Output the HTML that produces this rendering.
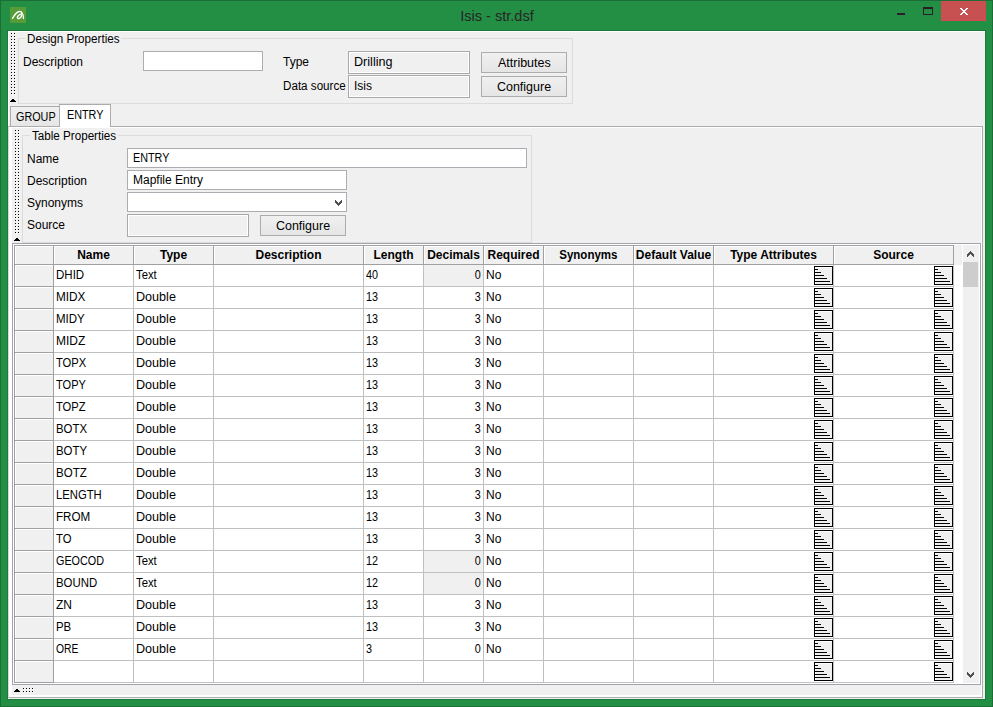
<!DOCTYPE html><html><head><meta charset="utf-8"><style>
*{margin:0;padding:0;box-sizing:border-box}
html,body{width:993px;height:707px;overflow:hidden;background:#238f45}
body{position:relative;font-family:"Liberation Sans",sans-serif;font-size:12px;color:#000}
.a{position:absolute}
.t{position:absolute;white-space:nowrap}
.dot{position:absolute;width:1px;height:1px;background:#000;box-shadow:1px 1px 0 #fff}
.tb{position:absolute;background:#fff;border:1px solid #abadb3}
.lb{position:absolute;background:#f0f0f0;border:1px solid #a9a9a9;box-shadow:inset 1px 1px 0 #fff, inset -1px -1px 0 #fff}
.btn{position:absolute;border:1px solid #acacac;background:linear-gradient(#f0f0f0,#e5e5e5);}
.gb{position:absolute;border:1px solid #dcdcdc}
.ic{position:absolute;width:19px;height:19px;border:1px solid #000;background:#f0f0f0;box-shadow:inset 1px 1px 0 #fff}
.ic i{position:absolute;left:0;height:1px;background:#000}
</style></head><body>

<div class="a" style="left:0;top:0;width:993px;height:707px;border:1px solid #1a6e36"></div>
<div class="a" style="left:7px;top:30px;width:979px;height:670px;border:1px solid #1b7b3b"></div>
<div class="a" style="left:8px;top:31px;width:977px;height:668px;background:#f0f0f0"></div>
<div class="a" style="left:8px;top:31px;width:977px;height:1px;background:#fff"></div>
<div class="a" style="left:8px;top:31px;width:1px;height:668px;background:#fff"></div>
<svg class="a" style="left:10px;top:7px" width="16" height="16" viewBox="0 0 16 16">
<rect width="16" height="16" fill="#579c38"/>
<g fill="none" stroke="#fff" stroke-width="1.35" stroke-linecap="round">
<path d="M2.5 11.3 C4.3 8.3 6.5 4.6 9.3 4.5 C11 4.4 11.8 5.2 12.1 6.2"/>
<path d="M11.6 6.4 C13.1 6.4 13.4 8.5 13.4 11.5"/>
<ellipse cx="9.5" cy="9.5" rx="2.5" ry="1.4" transform="rotate(-45 9.5 9.5)"/>
</g></svg>
<div class="t" style="left:0px;top:6px;font-size:15px;line-height:20px;color:#262626;width:993px;text-align:center;"><span style="display:inline-block;transform:scaleX(0.97);transform-origin:center">Isis - str.dsf</span></div>
<div class="a" style="left:897px;top:13px;width:8px;height:2px;background:#2b1d2b"></div>
<div class="a" style="left:923px;top:7px;width:10px;height:8px;border:1px solid #2b1d2b;border-top-width:2px"></div>
<div class="a" style="left:941px;top:1px;width:45px;height:20px;background:#c75050;border:1px solid #d24a52"></div>
<svg class="a" style="left:960px;top:8px" width="8" height="7" viewBox="0 0 8 7" shape-rendering="crispEdges" fill="#fff"><rect x="0" y="0" width="1" height="1"/><rect x="1" y="0" width="1" height="1"/><rect x="6" y="0" width="1" height="1"/><rect x="7" y="0" width="1" height="1"/><rect x="1" y="1" width="1" height="1"/><rect x="2" y="1" width="1" height="1"/><rect x="5" y="1" width="1" height="1"/><rect x="6" y="1" width="1" height="1"/><rect x="2" y="2" width="1" height="1"/><rect x="3" y="2" width="1" height="1"/><rect x="4" y="2" width="1" height="1"/><rect x="5" y="2" width="1" height="1"/><rect x="3" y="3" width="1" height="1"/><rect x="4" y="3" width="1" height="1"/><rect x="2" y="4" width="1" height="1"/><rect x="3" y="4" width="1" height="1"/><rect x="4" y="4" width="1" height="1"/><rect x="5" y="4" width="1" height="1"/><rect x="1" y="5" width="1" height="1"/><rect x="2" y="5" width="1" height="1"/><rect x="5" y="5" width="1" height="1"/><rect x="6" y="5" width="1" height="1"/><rect x="0" y="6" width="1" height="1"/><rect x="1" y="6" width="1" height="1"/><rect x="6" y="6" width="1" height="1"/><rect x="7" y="6" width="1" height="1"/></svg>
<div class="dot" style="left:11px;top:33px"></div><div class="dot" style="left:14px;top:33px"></div>
<div class="dot" style="left:11px;top:36px"></div><div class="dot" style="left:14px;top:36px"></div>
<div class="dot" style="left:11px;top:39px"></div><div class="dot" style="left:14px;top:39px"></div>
<div class="dot" style="left:11px;top:42px"></div><div class="dot" style="left:14px;top:42px"></div>
<div class="dot" style="left:11px;top:45px"></div><div class="dot" style="left:14px;top:45px"></div>
<div class="dot" style="left:11px;top:48px"></div><div class="dot" style="left:14px;top:48px"></div>
<div class="dot" style="left:11px;top:51px"></div><div class="dot" style="left:14px;top:51px"></div>
<div class="dot" style="left:11px;top:54px"></div><div class="dot" style="left:14px;top:54px"></div>
<div class="dot" style="left:11px;top:57px"></div><div class="dot" style="left:14px;top:57px"></div>
<div class="dot" style="left:11px;top:60px"></div><div class="dot" style="left:14px;top:60px"></div>
<div class="dot" style="left:11px;top:63px"></div><div class="dot" style="left:14px;top:63px"></div>
<div class="dot" style="left:11px;top:66px"></div><div class="dot" style="left:14px;top:66px"></div>
<div class="dot" style="left:11px;top:69px"></div><div class="dot" style="left:14px;top:69px"></div>
<div class="dot" style="left:11px;top:72px"></div><div class="dot" style="left:14px;top:72px"></div>
<div class="dot" style="left:11px;top:75px"></div><div class="dot" style="left:14px;top:75px"></div>
<div class="dot" style="left:11px;top:78px"></div><div class="dot" style="left:14px;top:78px"></div>
<div class="dot" style="left:11px;top:81px"></div><div class="dot" style="left:14px;top:81px"></div>
<div class="dot" style="left:11px;top:84px"></div><div class="dot" style="left:14px;top:84px"></div>
<div class="dot" style="left:11px;top:87px"></div><div class="dot" style="left:14px;top:87px"></div>
<div class="dot" style="left:11px;top:90px"></div><div class="dot" style="left:14px;top:90px"></div>
<div class="dot" style="left:11px;top:93px"></div><div class="dot" style="left:14px;top:93px"></div>
<div class="a" style="left:12px;top:99px;width:2px;height:1px;background:#000"></div>
<div class="a" style="left:11px;top:100px;width:4px;height:1px;background:#000"></div>
<div class="a" style="left:10px;top:101px;width:6px;height:1px;background:#000"></div>
<div class="gb" style="left:18px;top:38px;width:555px;height:66px"></div>
<div class="a" style="left:25px;top:33px;width:96px;height:12px;background:#f0f0f0"></div>
<div class="t" style="left:27px;top:29px;font-size:12px;line-height:20px;"><span style="display:inline-block;transform:scaleX(0.97);transform-origin:left">Design Properties</span></div>
<div class="t" style="left:23px;top:52px;font-size:12px;line-height:20px;">Description</div>
<div class="tb" style="left:143px;top:51px;width:120px;height:20px"></div>
<div class="t" style="left:283px;top:52px;font-size:12px;line-height:20px;">Type</div>
<div class="t" style="left:283px;top:76px;font-size:12px;line-height:20px;"><span style="display:inline-block;transform:scaleX(0.97);transform-origin:left">Data source</span></div>
<div class="lb" style="left:348px;top:51px;width:122px;height:23px"></div>
<div class="t" style="left:354px;top:52px;font-size:12px;line-height:20px;"><span style="display:inline-block;transform:scaleX(1.05);transform-origin:left">Drilling</span></div>
<div class="lb" style="left:348px;top:75px;width:122px;height:23px"></div>
<div class="t" style="left:354px;top:76px;font-size:12px;line-height:20px;">Isis</div>
<div class="btn" style="left:481px;top:52px;width:86px;height:21px"></div>
<div class="t" style="left:481px;top:53px;font-size:12px;line-height:20px;width:86px;text-align:center;"><span style="display:inline-block;transform:scaleX(1.04);transform-origin:center">Attributes</span></div>
<div class="btn" style="left:481px;top:76px;width:86px;height:21px"></div>
<div class="t" style="left:481px;top:77px;font-size:12px;line-height:20px;width:86px;text-align:center;"><span style="display:inline-block;transform:scaleX(1.04);transform-origin:center">Configure</span></div>
<div class="a" style="left:10px;top:106px;width:50px;height:21px;border:1px solid #acacac;border-bottom:none;background:linear-gradient(#f0f0f0,#e5e5e5)"></div>
<div class="t" style="left:16px;top:107px;font-size:12px;line-height:20px;"><span style="display:inline-block;transform:scaleX(0.9);transform-origin:left">GROUP</span></div>
<div class="a" style="left:8px;top:126px;width:975px;height:572px;border:1px solid #acacac;border-left-color:#d9d9d9;background:#fff"></div>
<div class="a" style="left:59px;top:104px;width:52px;height:23px;border:1px solid #acacac;border-bottom:none;background:#fff"></div>
<div class="t" style="left:67px;top:105px;font-size:12px;line-height:20px;"><span style="display:inline-block;transform:scaleX(0.9);transform-origin:left">ENTRY</span></div>
<div class="a" style="left:12px;top:128px;width:969px;height:567px;background:#f0f0f0"></div>
<div class="dot" style="left:15px;top:130px"></div><div class="dot" style="left:18px;top:130px"></div>
<div class="dot" style="left:15px;top:133px"></div><div class="dot" style="left:18px;top:133px"></div>
<div class="dot" style="left:15px;top:136px"></div><div class="dot" style="left:18px;top:136px"></div>
<div class="dot" style="left:15px;top:139px"></div><div class="dot" style="left:18px;top:139px"></div>
<div class="dot" style="left:15px;top:142px"></div><div class="dot" style="left:18px;top:142px"></div>
<div class="dot" style="left:15px;top:145px"></div><div class="dot" style="left:18px;top:145px"></div>
<div class="dot" style="left:15px;top:148px"></div><div class="dot" style="left:18px;top:148px"></div>
<div class="dot" style="left:15px;top:151px"></div><div class="dot" style="left:18px;top:151px"></div>
<div class="dot" style="left:15px;top:154px"></div><div class="dot" style="left:18px;top:154px"></div>
<div class="dot" style="left:15px;top:157px"></div><div class="dot" style="left:18px;top:157px"></div>
<div class="dot" style="left:15px;top:160px"></div><div class="dot" style="left:18px;top:160px"></div>
<div class="dot" style="left:15px;top:163px"></div><div class="dot" style="left:18px;top:163px"></div>
<div class="dot" style="left:15px;top:166px"></div><div class="dot" style="left:18px;top:166px"></div>
<div class="dot" style="left:15px;top:169px"></div><div class="dot" style="left:18px;top:169px"></div>
<div class="dot" style="left:15px;top:172px"></div><div class="dot" style="left:18px;top:172px"></div>
<div class="dot" style="left:15px;top:175px"></div><div class="dot" style="left:18px;top:175px"></div>
<div class="dot" style="left:15px;top:178px"></div><div class="dot" style="left:18px;top:178px"></div>
<div class="dot" style="left:15px;top:181px"></div><div class="dot" style="left:18px;top:181px"></div>
<div class="dot" style="left:15px;top:184px"></div><div class="dot" style="left:18px;top:184px"></div>
<div class="dot" style="left:15px;top:187px"></div><div class="dot" style="left:18px;top:187px"></div>
<div class="dot" style="left:15px;top:190px"></div><div class="dot" style="left:18px;top:190px"></div>
<div class="dot" style="left:15px;top:193px"></div><div class="dot" style="left:18px;top:193px"></div>
<div class="dot" style="left:15px;top:196px"></div><div class="dot" style="left:18px;top:196px"></div>
<div class="dot" style="left:15px;top:199px"></div><div class="dot" style="left:18px;top:199px"></div>
<div class="dot" style="left:15px;top:202px"></div><div class="dot" style="left:18px;top:202px"></div>
<div class="dot" style="left:15px;top:205px"></div><div class="dot" style="left:18px;top:205px"></div>
<div class="dot" style="left:15px;top:208px"></div><div class="dot" style="left:18px;top:208px"></div>
<div class="dot" style="left:15px;top:211px"></div><div class="dot" style="left:18px;top:211px"></div>
<div class="dot" style="left:15px;top:214px"></div><div class="dot" style="left:18px;top:214px"></div>
<div class="dot" style="left:15px;top:217px"></div><div class="dot" style="left:18px;top:217px"></div>
<div class="dot" style="left:15px;top:220px"></div><div class="dot" style="left:18px;top:220px"></div>
<div class="dot" style="left:15px;top:223px"></div><div class="dot" style="left:18px;top:223px"></div>
<div class="dot" style="left:15px;top:226px"></div><div class="dot" style="left:18px;top:226px"></div>
<div class="dot" style="left:15px;top:229px"></div><div class="dot" style="left:18px;top:229px"></div>
<div class="dot" style="left:15px;top:232px"></div><div class="dot" style="left:18px;top:232px"></div>
<div class="a" style="left:16px;top:238px;width:2px;height:1px;background:#000"></div>
<div class="a" style="left:15px;top:239px;width:4px;height:1px;background:#000"></div>
<div class="a" style="left:14px;top:240px;width:6px;height:1px;background:#000"></div>
<div class="gb" style="left:22px;top:135px;width:510px;height:108px"></div>
<div class="a" style="left:30px;top:130px;width:88px;height:12px;background:#f0f0f0"></div>
<div class="t" style="left:32px;top:126px;font-size:12px;line-height:20px;"><span style="display:inline-block;transform:scaleX(0.97);transform-origin:left">Table Properties</span></div>
<div class="t" style="left:27px;top:149px;font-size:12px;line-height:20px;">Name</div>
<div class="t" style="left:27px;top:171px;font-size:12px;line-height:20px;">Description</div>
<div class="t" style="left:27px;top:193px;font-size:12px;line-height:20px;">Synonyms</div>
<div class="t" style="left:27px;top:215px;font-size:12px;line-height:20px;">Source</div>
<div class="tb" style="left:127px;top:148px;width:400px;height:20px"></div>
<div class="t" style="left:133px;top:148px;font-size:12px;line-height:20px;"><span style="display:inline-block;transform:scaleX(0.9);transform-origin:left">ENTRY</span></div>
<div class="tb" style="left:127px;top:170px;width:220px;height:20px"></div>
<div class="t" style="left:133px;top:170px;font-size:12px;line-height:20px;">Mapfile Entry</div>
<div class="tb" style="left:127px;top:192px;width:220px;height:20px"></div>
<svg class="a" style="left:335px;top:200px" width="7" height="6" viewBox="0 0 7 6" shape-rendering="crispEdges" fill="#505050"><rect x="0" y="0" width="1" height="1"/><rect x="6" y="0" width="1" height="1"/><rect x="0" y="1" width="1" height="1"/><rect x="1" y="1" width="1" height="1"/><rect x="5" y="1" width="1" height="1"/><rect x="6" y="1" width="1" height="1"/><rect x="0" y="2" width="1" height="1"/><rect x="1" y="2" width="1" height="1"/><rect x="2" y="2" width="1" height="1"/><rect x="4" y="2" width="1" height="1"/><rect x="5" y="2" width="1" height="1"/><rect x="6" y="2" width="1" height="1"/><rect x="1" y="3" width="1" height="1"/><rect x="2" y="3" width="1" height="1"/><rect x="3" y="3" width="1" height="1"/><rect x="4" y="3" width="1" height="1"/><rect x="5" y="3" width="1" height="1"/><rect x="2" y="4" width="1" height="1"/><rect x="3" y="4" width="1" height="1"/><rect x="4" y="4" width="1" height="1"/><rect x="3" y="5" width="1" height="1"/></svg>
<div class="lb" style="left:127px;top:214px;width:122px;height:23px"></div>
<div class="btn" style="left:260px;top:215px;width:86px;height:21px"></div>
<div class="t" style="left:260px;top:216px;font-size:12px;line-height:20px;width:86px;text-align:center;"><span style="display:inline-block;transform:scaleX(1.04);transform-origin:center">Configure</span></div>
<div class="a" style="left:12px;top:243px;width:969px;height:442px;border:1px solid #a3a3ab;background:#fff"></div>
<div class="a" style="left:14px;top:245px;width:948px;height:20px;background:#f0f0f0"></div>
<div class="a" style="left:14px;top:245px;width:940px;height:1px;background:#a0a0a0"></div>
<div class="a" style="left:14px;top:264px;width:940px;height:1px;background:#a0a0a0"></div>
<div class="a" style="left:14px;top:245px;width:1px;height:438px;background:#a0a0a0"></div>
<div class="a" style="left:53px;top:245px;width:1px;height:20px;background:#a0a0a0"></div>
<div class="a" style="left:15px;top:246px;width:38px;height:1px;background:#fff"></div>
<div class="a" style="left:15px;top:246px;width:1px;height:18px;background:#fff"></div>
<div class="a" style="left:133px;top:245px;width:1px;height:20px;background:#a0a0a0"></div>
<div class="a" style="left:54px;top:246px;width:79px;height:1px;background:#fff"></div>
<div class="a" style="left:54px;top:246px;width:1px;height:18px;background:#fff"></div>
<div class="t" style="left:54px;top:245px;font-size:12px;line-height:20px;font-weight:bold;width:79px;text-align:center;">Name</div>
<div class="a" style="left:213px;top:245px;width:1px;height:20px;background:#a0a0a0"></div>
<div class="a" style="left:134px;top:246px;width:79px;height:1px;background:#fff"></div>
<div class="a" style="left:134px;top:246px;width:1px;height:18px;background:#fff"></div>
<div class="t" style="left:134px;top:245px;font-size:12px;line-height:20px;font-weight:bold;width:79px;text-align:center;">Type</div>
<div class="a" style="left:363px;top:245px;width:1px;height:20px;background:#a0a0a0"></div>
<div class="a" style="left:214px;top:246px;width:149px;height:1px;background:#fff"></div>
<div class="a" style="left:214px;top:246px;width:1px;height:18px;background:#fff"></div>
<div class="t" style="left:214px;top:245px;font-size:12px;line-height:20px;font-weight:bold;width:149px;text-align:center;">Description</div>
<div class="a" style="left:423px;top:245px;width:1px;height:20px;background:#a0a0a0"></div>
<div class="a" style="left:364px;top:246px;width:59px;height:1px;background:#fff"></div>
<div class="a" style="left:364px;top:246px;width:1px;height:18px;background:#fff"></div>
<div class="t" style="left:364px;top:245px;font-size:12px;line-height:20px;font-weight:bold;width:59px;text-align:center;">Length</div>
<div class="a" style="left:483px;top:245px;width:1px;height:20px;background:#a0a0a0"></div>
<div class="a" style="left:424px;top:246px;width:59px;height:1px;background:#fff"></div>
<div class="a" style="left:424px;top:246px;width:1px;height:18px;background:#fff"></div>
<div class="t" style="left:424px;top:245px;font-size:12px;line-height:20px;font-weight:bold;width:59px;text-align:center;">Decimals</div>
<div class="a" style="left:543px;top:245px;width:1px;height:20px;background:#a0a0a0"></div>
<div class="a" style="left:484px;top:246px;width:59px;height:1px;background:#fff"></div>
<div class="a" style="left:484px;top:246px;width:1px;height:18px;background:#fff"></div>
<div class="t" style="left:484px;top:245px;font-size:12px;line-height:20px;font-weight:bold;width:59px;text-align:center;">Required</div>
<div class="a" style="left:633px;top:245px;width:1px;height:20px;background:#a0a0a0"></div>
<div class="a" style="left:544px;top:246px;width:89px;height:1px;background:#fff"></div>
<div class="a" style="left:544px;top:246px;width:1px;height:18px;background:#fff"></div>
<div class="t" style="left:544px;top:245px;font-size:12px;line-height:20px;font-weight:bold;width:89px;text-align:center;"><span style="display:inline-block;transform:scaleX(0.96);transform-origin:center">Synonyms</span></div>
<div class="a" style="left:713px;top:245px;width:1px;height:20px;background:#a0a0a0"></div>
<div class="a" style="left:634px;top:246px;width:79px;height:1px;background:#fff"></div>
<div class="a" style="left:634px;top:246px;width:1px;height:18px;background:#fff"></div>
<div class="t" style="left:634px;top:245px;font-size:12px;line-height:20px;font-weight:bold;width:79px;text-align:center;">Default Value</div>
<div class="a" style="left:833px;top:245px;width:1px;height:20px;background:#a0a0a0"></div>
<div class="a" style="left:714px;top:246px;width:119px;height:1px;background:#fff"></div>
<div class="a" style="left:714px;top:246px;width:1px;height:18px;background:#fff"></div>
<div class="t" style="left:714px;top:245px;font-size:12px;line-height:20px;font-weight:bold;width:119px;text-align:center;">Type Attributes</div>
<div class="a" style="left:953px;top:245px;width:1px;height:20px;background:#a0a0a0"></div>
<div class="a" style="left:834px;top:246px;width:119px;height:1px;background:#fff"></div>
<div class="a" style="left:834px;top:246px;width:1px;height:18px;background:#fff"></div>
<div class="t" style="left:834px;top:245px;font-size:12px;line-height:20px;font-weight:bold;width:119px;text-align:center;">Source</div>
<div class="a" style="left:15px;top:265px;width:38px;height:21px;background:#f0f0f0;border-top:1px solid #fff;border-left:1px solid #fff"></div>
<div class="a" style="left:14px;top:286px;width:39px;height:1px;background:#a0a0a0"></div>
<div class="a" style="left:53px;top:265px;width:1px;height:22px;background:#a0a0a0"></div>
<div class="a" style="left:54px;top:286px;width:900px;height:1px;background:#c0c0c0"></div>
<div class="a" style="left:133px;top:265px;width:1px;height:21px;background:#c0c0c0"></div>
<div class="a" style="left:213px;top:265px;width:1px;height:21px;background:#c0c0c0"></div>
<div class="a" style="left:363px;top:265px;width:1px;height:21px;background:#c0c0c0"></div>
<div class="a" style="left:423px;top:265px;width:1px;height:21px;background:#c0c0c0"></div>
<div class="a" style="left:483px;top:265px;width:1px;height:21px;background:#c0c0c0"></div>
<div class="a" style="left:543px;top:265px;width:1px;height:21px;background:#c0c0c0"></div>
<div class="a" style="left:633px;top:265px;width:1px;height:21px;background:#c0c0c0"></div>
<div class="a" style="left:713px;top:265px;width:1px;height:21px;background:#c0c0c0"></div>
<div class="a" style="left:833px;top:265px;width:1px;height:21px;background:#c0c0c0"></div>
<div class="a" style="left:953px;top:265px;width:1px;height:21px;background:#c0c0c0"></div>
<div class="a" style="left:424px;top:265px;width:59px;height:21px;background:#f0f0f0"></div>
<div class="t" style="left:56px;top:265px;font-size:12px;line-height:20px;"><span style="display:inline-block;transform:scaleX(0.96);transform-origin:left">DHID</span></div>
<div class="t" style="left:136px;top:265px;font-size:12px;line-height:20px;"><span style="display:inline-block;transform:scaleX(0.94);transform-origin:left">Text</span></div>
<div class="t" style="left:366px;top:265px;font-size:12px;line-height:20px;"><span style="display:inline-block;transform:scaleX(0.9);transform-origin:left">40</span></div>
<div class="t" style="left:424px;top:265px;font-size:12px;line-height:20px;width:57px;text-align:right;"><span style="display:inline-block;transform:scaleX(0.9);transform-origin:right">0</span></div>
<div class="t" style="left:486px;top:265px;font-size:12px;line-height:20px;">No</div>
<div class="ic" style="left:814px;top:266px"><i style="top:2px;width:3px"></i><i style="top:5px;width:6px"></i><i style="top:8px;width:9px"></i><i style="top:11px;width:12px"></i><i style="top:14px;width:15px"></i></div>
<div class="ic" style="left:934px;top:266px"><i style="top:2px;width:3px"></i><i style="top:5px;width:6px"></i><i style="top:8px;width:9px"></i><i style="top:11px;width:12px"></i><i style="top:14px;width:15px"></i></div>
<div class="a" style="left:15px;top:287px;width:38px;height:21px;background:#f0f0f0;border-top:1px solid #fff;border-left:1px solid #fff"></div>
<div class="a" style="left:14px;top:308px;width:39px;height:1px;background:#a0a0a0"></div>
<div class="a" style="left:53px;top:287px;width:1px;height:22px;background:#a0a0a0"></div>
<div class="a" style="left:54px;top:308px;width:900px;height:1px;background:#c0c0c0"></div>
<div class="a" style="left:133px;top:287px;width:1px;height:21px;background:#c0c0c0"></div>
<div class="a" style="left:213px;top:287px;width:1px;height:21px;background:#c0c0c0"></div>
<div class="a" style="left:363px;top:287px;width:1px;height:21px;background:#c0c0c0"></div>
<div class="a" style="left:423px;top:287px;width:1px;height:21px;background:#c0c0c0"></div>
<div class="a" style="left:483px;top:287px;width:1px;height:21px;background:#c0c0c0"></div>
<div class="a" style="left:543px;top:287px;width:1px;height:21px;background:#c0c0c0"></div>
<div class="a" style="left:633px;top:287px;width:1px;height:21px;background:#c0c0c0"></div>
<div class="a" style="left:713px;top:287px;width:1px;height:21px;background:#c0c0c0"></div>
<div class="a" style="left:833px;top:287px;width:1px;height:21px;background:#c0c0c0"></div>
<div class="a" style="left:953px;top:287px;width:1px;height:21px;background:#c0c0c0"></div>
<div class="t" style="left:56px;top:287px;font-size:12px;line-height:20px;"><span style="display:inline-block;transform:scaleX(0.98);transform-origin:left">MIDX</span></div>
<div class="t" style="left:136px;top:287px;font-size:12px;line-height:20px;"><span style="display:inline-block;transform:scaleX(1.05);transform-origin:left">Double</span></div>
<div class="t" style="left:366px;top:287px;font-size:12px;line-height:20px;"><span style="display:inline-block;transform:scaleX(0.9);transform-origin:left">13</span></div>
<div class="t" style="left:424px;top:287px;font-size:12px;line-height:20px;width:57px;text-align:right;"><span style="display:inline-block;transform:scaleX(0.9);transform-origin:right">3</span></div>
<div class="t" style="left:486px;top:287px;font-size:12px;line-height:20px;">No</div>
<div class="ic" style="left:814px;top:288px"><i style="top:2px;width:3px"></i><i style="top:5px;width:6px"></i><i style="top:8px;width:9px"></i><i style="top:11px;width:12px"></i><i style="top:14px;width:15px"></i></div>
<div class="ic" style="left:934px;top:288px"><i style="top:2px;width:3px"></i><i style="top:5px;width:6px"></i><i style="top:8px;width:9px"></i><i style="top:11px;width:12px"></i><i style="top:14px;width:15px"></i></div>
<div class="a" style="left:15px;top:309px;width:38px;height:21px;background:#f0f0f0;border-top:1px solid #fff;border-left:1px solid #fff"></div>
<div class="a" style="left:14px;top:330px;width:39px;height:1px;background:#a0a0a0"></div>
<div class="a" style="left:53px;top:309px;width:1px;height:22px;background:#a0a0a0"></div>
<div class="a" style="left:54px;top:330px;width:900px;height:1px;background:#c0c0c0"></div>
<div class="a" style="left:133px;top:309px;width:1px;height:21px;background:#c0c0c0"></div>
<div class="a" style="left:213px;top:309px;width:1px;height:21px;background:#c0c0c0"></div>
<div class="a" style="left:363px;top:309px;width:1px;height:21px;background:#c0c0c0"></div>
<div class="a" style="left:423px;top:309px;width:1px;height:21px;background:#c0c0c0"></div>
<div class="a" style="left:483px;top:309px;width:1px;height:21px;background:#c0c0c0"></div>
<div class="a" style="left:543px;top:309px;width:1px;height:21px;background:#c0c0c0"></div>
<div class="a" style="left:633px;top:309px;width:1px;height:21px;background:#c0c0c0"></div>
<div class="a" style="left:713px;top:309px;width:1px;height:21px;background:#c0c0c0"></div>
<div class="a" style="left:833px;top:309px;width:1px;height:21px;background:#c0c0c0"></div>
<div class="a" style="left:953px;top:309px;width:1px;height:21px;background:#c0c0c0"></div>
<div class="t" style="left:56px;top:309px;font-size:12px;line-height:20px;"><span style="display:inline-block;transform:scaleX(0.96);transform-origin:left">MIDY</span></div>
<div class="t" style="left:136px;top:309px;font-size:12px;line-height:20px;"><span style="display:inline-block;transform:scaleX(1.05);transform-origin:left">Double</span></div>
<div class="t" style="left:366px;top:309px;font-size:12px;line-height:20px;"><span style="display:inline-block;transform:scaleX(0.9);transform-origin:left">13</span></div>
<div class="t" style="left:424px;top:309px;font-size:12px;line-height:20px;width:57px;text-align:right;"><span style="display:inline-block;transform:scaleX(0.9);transform-origin:right">3</span></div>
<div class="t" style="left:486px;top:309px;font-size:12px;line-height:20px;">No</div>
<div class="ic" style="left:814px;top:310px"><i style="top:2px;width:3px"></i><i style="top:5px;width:6px"></i><i style="top:8px;width:9px"></i><i style="top:11px;width:12px"></i><i style="top:14px;width:15px"></i></div>
<div class="ic" style="left:934px;top:310px"><i style="top:2px;width:3px"></i><i style="top:5px;width:6px"></i><i style="top:8px;width:9px"></i><i style="top:11px;width:12px"></i><i style="top:14px;width:15px"></i></div>
<div class="a" style="left:15px;top:331px;width:38px;height:21px;background:#f0f0f0;border-top:1px solid #fff;border-left:1px solid #fff"></div>
<div class="a" style="left:14px;top:352px;width:39px;height:1px;background:#a0a0a0"></div>
<div class="a" style="left:53px;top:331px;width:1px;height:22px;background:#a0a0a0"></div>
<div class="a" style="left:54px;top:352px;width:900px;height:1px;background:#c0c0c0"></div>
<div class="a" style="left:133px;top:331px;width:1px;height:21px;background:#c0c0c0"></div>
<div class="a" style="left:213px;top:331px;width:1px;height:21px;background:#c0c0c0"></div>
<div class="a" style="left:363px;top:331px;width:1px;height:21px;background:#c0c0c0"></div>
<div class="a" style="left:423px;top:331px;width:1px;height:21px;background:#c0c0c0"></div>
<div class="a" style="left:483px;top:331px;width:1px;height:21px;background:#c0c0c0"></div>
<div class="a" style="left:543px;top:331px;width:1px;height:21px;background:#c0c0c0"></div>
<div class="a" style="left:633px;top:331px;width:1px;height:21px;background:#c0c0c0"></div>
<div class="a" style="left:713px;top:331px;width:1px;height:21px;background:#c0c0c0"></div>
<div class="a" style="left:833px;top:331px;width:1px;height:21px;background:#c0c0c0"></div>
<div class="a" style="left:953px;top:331px;width:1px;height:21px;background:#c0c0c0"></div>
<div class="t" style="left:56px;top:331px;font-size:12px;line-height:20px;"><span style="display:inline-block;transform:scaleX(1.0);transform-origin:left">MIDZ</span></div>
<div class="t" style="left:136px;top:331px;font-size:12px;line-height:20px;"><span style="display:inline-block;transform:scaleX(1.05);transform-origin:left">Double</span></div>
<div class="t" style="left:366px;top:331px;font-size:12px;line-height:20px;"><span style="display:inline-block;transform:scaleX(0.9);transform-origin:left">13</span></div>
<div class="t" style="left:424px;top:331px;font-size:12px;line-height:20px;width:57px;text-align:right;"><span style="display:inline-block;transform:scaleX(0.9);transform-origin:right">3</span></div>
<div class="t" style="left:486px;top:331px;font-size:12px;line-height:20px;">No</div>
<div class="ic" style="left:814px;top:332px"><i style="top:2px;width:3px"></i><i style="top:5px;width:6px"></i><i style="top:8px;width:9px"></i><i style="top:11px;width:12px"></i><i style="top:14px;width:15px"></i></div>
<div class="ic" style="left:934px;top:332px"><i style="top:2px;width:3px"></i><i style="top:5px;width:6px"></i><i style="top:8px;width:9px"></i><i style="top:11px;width:12px"></i><i style="top:14px;width:15px"></i></div>
<div class="a" style="left:15px;top:353px;width:38px;height:21px;background:#f0f0f0;border-top:1px solid #fff;border-left:1px solid #fff"></div>
<div class="a" style="left:14px;top:374px;width:39px;height:1px;background:#a0a0a0"></div>
<div class="a" style="left:53px;top:353px;width:1px;height:22px;background:#a0a0a0"></div>
<div class="a" style="left:54px;top:374px;width:900px;height:1px;background:#c0c0c0"></div>
<div class="a" style="left:133px;top:353px;width:1px;height:21px;background:#c0c0c0"></div>
<div class="a" style="left:213px;top:353px;width:1px;height:21px;background:#c0c0c0"></div>
<div class="a" style="left:363px;top:353px;width:1px;height:21px;background:#c0c0c0"></div>
<div class="a" style="left:423px;top:353px;width:1px;height:21px;background:#c0c0c0"></div>
<div class="a" style="left:483px;top:353px;width:1px;height:21px;background:#c0c0c0"></div>
<div class="a" style="left:543px;top:353px;width:1px;height:21px;background:#c0c0c0"></div>
<div class="a" style="left:633px;top:353px;width:1px;height:21px;background:#c0c0c0"></div>
<div class="a" style="left:713px;top:353px;width:1px;height:21px;background:#c0c0c0"></div>
<div class="a" style="left:833px;top:353px;width:1px;height:21px;background:#c0c0c0"></div>
<div class="a" style="left:953px;top:353px;width:1px;height:21px;background:#c0c0c0"></div>
<div class="t" style="left:56px;top:353px;font-size:12px;line-height:20px;"><span style="display:inline-block;transform:scaleX(0.93);transform-origin:left">TOPX</span></div>
<div class="t" style="left:136px;top:353px;font-size:12px;line-height:20px;"><span style="display:inline-block;transform:scaleX(1.05);transform-origin:left">Double</span></div>
<div class="t" style="left:366px;top:353px;font-size:12px;line-height:20px;"><span style="display:inline-block;transform:scaleX(0.9);transform-origin:left">13</span></div>
<div class="t" style="left:424px;top:353px;font-size:12px;line-height:20px;width:57px;text-align:right;"><span style="display:inline-block;transform:scaleX(0.9);transform-origin:right">3</span></div>
<div class="t" style="left:486px;top:353px;font-size:12px;line-height:20px;">No</div>
<div class="ic" style="left:814px;top:354px"><i style="top:2px;width:3px"></i><i style="top:5px;width:6px"></i><i style="top:8px;width:9px"></i><i style="top:11px;width:12px"></i><i style="top:14px;width:15px"></i></div>
<div class="ic" style="left:934px;top:354px"><i style="top:2px;width:3px"></i><i style="top:5px;width:6px"></i><i style="top:8px;width:9px"></i><i style="top:11px;width:12px"></i><i style="top:14px;width:15px"></i></div>
<div class="a" style="left:15px;top:375px;width:38px;height:21px;background:#f0f0f0;border-top:1px solid #fff;border-left:1px solid #fff"></div>
<div class="a" style="left:14px;top:396px;width:39px;height:1px;background:#a0a0a0"></div>
<div class="a" style="left:53px;top:375px;width:1px;height:22px;background:#a0a0a0"></div>
<div class="a" style="left:54px;top:396px;width:900px;height:1px;background:#c0c0c0"></div>
<div class="a" style="left:133px;top:375px;width:1px;height:21px;background:#c0c0c0"></div>
<div class="a" style="left:213px;top:375px;width:1px;height:21px;background:#c0c0c0"></div>
<div class="a" style="left:363px;top:375px;width:1px;height:21px;background:#c0c0c0"></div>
<div class="a" style="left:423px;top:375px;width:1px;height:21px;background:#c0c0c0"></div>
<div class="a" style="left:483px;top:375px;width:1px;height:21px;background:#c0c0c0"></div>
<div class="a" style="left:543px;top:375px;width:1px;height:21px;background:#c0c0c0"></div>
<div class="a" style="left:633px;top:375px;width:1px;height:21px;background:#c0c0c0"></div>
<div class="a" style="left:713px;top:375px;width:1px;height:21px;background:#c0c0c0"></div>
<div class="a" style="left:833px;top:375px;width:1px;height:21px;background:#c0c0c0"></div>
<div class="a" style="left:953px;top:375px;width:1px;height:21px;background:#c0c0c0"></div>
<div class="t" style="left:56px;top:375px;font-size:12px;line-height:20px;"><span style="display:inline-block;transform:scaleX(0.92);transform-origin:left">TOPY</span></div>
<div class="t" style="left:136px;top:375px;font-size:12px;line-height:20px;"><span style="display:inline-block;transform:scaleX(1.05);transform-origin:left">Double</span></div>
<div class="t" style="left:366px;top:375px;font-size:12px;line-height:20px;"><span style="display:inline-block;transform:scaleX(0.9);transform-origin:left">13</span></div>
<div class="t" style="left:424px;top:375px;font-size:12px;line-height:20px;width:57px;text-align:right;"><span style="display:inline-block;transform:scaleX(0.9);transform-origin:right">3</span></div>
<div class="t" style="left:486px;top:375px;font-size:12px;line-height:20px;">No</div>
<div class="ic" style="left:814px;top:376px"><i style="top:2px;width:3px"></i><i style="top:5px;width:6px"></i><i style="top:8px;width:9px"></i><i style="top:11px;width:12px"></i><i style="top:14px;width:15px"></i></div>
<div class="ic" style="left:934px;top:376px"><i style="top:2px;width:3px"></i><i style="top:5px;width:6px"></i><i style="top:8px;width:9px"></i><i style="top:11px;width:12px"></i><i style="top:14px;width:15px"></i></div>
<div class="a" style="left:15px;top:397px;width:38px;height:21px;background:#f0f0f0;border-top:1px solid #fff;border-left:1px solid #fff"></div>
<div class="a" style="left:14px;top:418px;width:39px;height:1px;background:#a0a0a0"></div>
<div class="a" style="left:53px;top:397px;width:1px;height:22px;background:#a0a0a0"></div>
<div class="a" style="left:54px;top:418px;width:900px;height:1px;background:#c0c0c0"></div>
<div class="a" style="left:133px;top:397px;width:1px;height:21px;background:#c0c0c0"></div>
<div class="a" style="left:213px;top:397px;width:1px;height:21px;background:#c0c0c0"></div>
<div class="a" style="left:363px;top:397px;width:1px;height:21px;background:#c0c0c0"></div>
<div class="a" style="left:423px;top:397px;width:1px;height:21px;background:#c0c0c0"></div>
<div class="a" style="left:483px;top:397px;width:1px;height:21px;background:#c0c0c0"></div>
<div class="a" style="left:543px;top:397px;width:1px;height:21px;background:#c0c0c0"></div>
<div class="a" style="left:633px;top:397px;width:1px;height:21px;background:#c0c0c0"></div>
<div class="a" style="left:713px;top:397px;width:1px;height:21px;background:#c0c0c0"></div>
<div class="a" style="left:833px;top:397px;width:1px;height:21px;background:#c0c0c0"></div>
<div class="a" style="left:953px;top:397px;width:1px;height:21px;background:#c0c0c0"></div>
<div class="t" style="left:56px;top:397px;font-size:12px;line-height:20px;"><span style="display:inline-block;transform:scaleX(0.93);transform-origin:left">TOPZ</span></div>
<div class="t" style="left:136px;top:397px;font-size:12px;line-height:20px;"><span style="display:inline-block;transform:scaleX(1.05);transform-origin:left">Double</span></div>
<div class="t" style="left:366px;top:397px;font-size:12px;line-height:20px;"><span style="display:inline-block;transform:scaleX(0.9);transform-origin:left">13</span></div>
<div class="t" style="left:424px;top:397px;font-size:12px;line-height:20px;width:57px;text-align:right;"><span style="display:inline-block;transform:scaleX(0.9);transform-origin:right">3</span></div>
<div class="t" style="left:486px;top:397px;font-size:12px;line-height:20px;">No</div>
<div class="ic" style="left:814px;top:398px"><i style="top:2px;width:3px"></i><i style="top:5px;width:6px"></i><i style="top:8px;width:9px"></i><i style="top:11px;width:12px"></i><i style="top:14px;width:15px"></i></div>
<div class="ic" style="left:934px;top:398px"><i style="top:2px;width:3px"></i><i style="top:5px;width:6px"></i><i style="top:8px;width:9px"></i><i style="top:11px;width:12px"></i><i style="top:14px;width:15px"></i></div>
<div class="a" style="left:15px;top:419px;width:38px;height:21px;background:#f0f0f0;border-top:1px solid #fff;border-left:1px solid #fff"></div>
<div class="a" style="left:14px;top:440px;width:39px;height:1px;background:#a0a0a0"></div>
<div class="a" style="left:53px;top:419px;width:1px;height:22px;background:#a0a0a0"></div>
<div class="a" style="left:54px;top:440px;width:900px;height:1px;background:#c0c0c0"></div>
<div class="a" style="left:133px;top:419px;width:1px;height:21px;background:#c0c0c0"></div>
<div class="a" style="left:213px;top:419px;width:1px;height:21px;background:#c0c0c0"></div>
<div class="a" style="left:363px;top:419px;width:1px;height:21px;background:#c0c0c0"></div>
<div class="a" style="left:423px;top:419px;width:1px;height:21px;background:#c0c0c0"></div>
<div class="a" style="left:483px;top:419px;width:1px;height:21px;background:#c0c0c0"></div>
<div class="a" style="left:543px;top:419px;width:1px;height:21px;background:#c0c0c0"></div>
<div class="a" style="left:633px;top:419px;width:1px;height:21px;background:#c0c0c0"></div>
<div class="a" style="left:713px;top:419px;width:1px;height:21px;background:#c0c0c0"></div>
<div class="a" style="left:833px;top:419px;width:1px;height:21px;background:#c0c0c0"></div>
<div class="a" style="left:953px;top:419px;width:1px;height:21px;background:#c0c0c0"></div>
<div class="t" style="left:56px;top:419px;font-size:12px;line-height:20px;"><span style="display:inline-block;transform:scaleX(0.95);transform-origin:left">BOTX</span></div>
<div class="t" style="left:136px;top:419px;font-size:12px;line-height:20px;"><span style="display:inline-block;transform:scaleX(1.05);transform-origin:left">Double</span></div>
<div class="t" style="left:366px;top:419px;font-size:12px;line-height:20px;"><span style="display:inline-block;transform:scaleX(0.9);transform-origin:left">13</span></div>
<div class="t" style="left:424px;top:419px;font-size:12px;line-height:20px;width:57px;text-align:right;"><span style="display:inline-block;transform:scaleX(0.9);transform-origin:right">3</span></div>
<div class="t" style="left:486px;top:419px;font-size:12px;line-height:20px;">No</div>
<div class="ic" style="left:814px;top:420px"><i style="top:2px;width:3px"></i><i style="top:5px;width:6px"></i><i style="top:8px;width:9px"></i><i style="top:11px;width:12px"></i><i style="top:14px;width:15px"></i></div>
<div class="ic" style="left:934px;top:420px"><i style="top:2px;width:3px"></i><i style="top:5px;width:6px"></i><i style="top:8px;width:9px"></i><i style="top:11px;width:12px"></i><i style="top:14px;width:15px"></i></div>
<div class="a" style="left:15px;top:441px;width:38px;height:21px;background:#f0f0f0;border-top:1px solid #fff;border-left:1px solid #fff"></div>
<div class="a" style="left:14px;top:462px;width:39px;height:1px;background:#a0a0a0"></div>
<div class="a" style="left:53px;top:441px;width:1px;height:22px;background:#a0a0a0"></div>
<div class="a" style="left:54px;top:462px;width:900px;height:1px;background:#c0c0c0"></div>
<div class="a" style="left:133px;top:441px;width:1px;height:21px;background:#c0c0c0"></div>
<div class="a" style="left:213px;top:441px;width:1px;height:21px;background:#c0c0c0"></div>
<div class="a" style="left:363px;top:441px;width:1px;height:21px;background:#c0c0c0"></div>
<div class="a" style="left:423px;top:441px;width:1px;height:21px;background:#c0c0c0"></div>
<div class="a" style="left:483px;top:441px;width:1px;height:21px;background:#c0c0c0"></div>
<div class="a" style="left:543px;top:441px;width:1px;height:21px;background:#c0c0c0"></div>
<div class="a" style="left:633px;top:441px;width:1px;height:21px;background:#c0c0c0"></div>
<div class="a" style="left:713px;top:441px;width:1px;height:21px;background:#c0c0c0"></div>
<div class="a" style="left:833px;top:441px;width:1px;height:21px;background:#c0c0c0"></div>
<div class="a" style="left:953px;top:441px;width:1px;height:21px;background:#c0c0c0"></div>
<div class="t" style="left:56px;top:441px;font-size:12px;line-height:20px;"><span style="display:inline-block;transform:scaleX(0.95);transform-origin:left">BOTY</span></div>
<div class="t" style="left:136px;top:441px;font-size:12px;line-height:20px;"><span style="display:inline-block;transform:scaleX(1.05);transform-origin:left">Double</span></div>
<div class="t" style="left:366px;top:441px;font-size:12px;line-height:20px;"><span style="display:inline-block;transform:scaleX(0.9);transform-origin:left">13</span></div>
<div class="t" style="left:424px;top:441px;font-size:12px;line-height:20px;width:57px;text-align:right;"><span style="display:inline-block;transform:scaleX(0.9);transform-origin:right">3</span></div>
<div class="t" style="left:486px;top:441px;font-size:12px;line-height:20px;">No</div>
<div class="ic" style="left:814px;top:442px"><i style="top:2px;width:3px"></i><i style="top:5px;width:6px"></i><i style="top:8px;width:9px"></i><i style="top:11px;width:12px"></i><i style="top:14px;width:15px"></i></div>
<div class="ic" style="left:934px;top:442px"><i style="top:2px;width:3px"></i><i style="top:5px;width:6px"></i><i style="top:8px;width:9px"></i><i style="top:11px;width:12px"></i><i style="top:14px;width:15px"></i></div>
<div class="a" style="left:15px;top:463px;width:38px;height:21px;background:#f0f0f0;border-top:1px solid #fff;border-left:1px solid #fff"></div>
<div class="a" style="left:14px;top:484px;width:39px;height:1px;background:#a0a0a0"></div>
<div class="a" style="left:53px;top:463px;width:1px;height:22px;background:#a0a0a0"></div>
<div class="a" style="left:54px;top:484px;width:900px;height:1px;background:#c0c0c0"></div>
<div class="a" style="left:133px;top:463px;width:1px;height:21px;background:#c0c0c0"></div>
<div class="a" style="left:213px;top:463px;width:1px;height:21px;background:#c0c0c0"></div>
<div class="a" style="left:363px;top:463px;width:1px;height:21px;background:#c0c0c0"></div>
<div class="a" style="left:423px;top:463px;width:1px;height:21px;background:#c0c0c0"></div>
<div class="a" style="left:483px;top:463px;width:1px;height:21px;background:#c0c0c0"></div>
<div class="a" style="left:543px;top:463px;width:1px;height:21px;background:#c0c0c0"></div>
<div class="a" style="left:633px;top:463px;width:1px;height:21px;background:#c0c0c0"></div>
<div class="a" style="left:713px;top:463px;width:1px;height:21px;background:#c0c0c0"></div>
<div class="a" style="left:833px;top:463px;width:1px;height:21px;background:#c0c0c0"></div>
<div class="a" style="left:953px;top:463px;width:1px;height:21px;background:#c0c0c0"></div>
<div class="t" style="left:56px;top:463px;font-size:12px;line-height:20px;"><span style="display:inline-block;transform:scaleX(0.96);transform-origin:left">BOTZ</span></div>
<div class="t" style="left:136px;top:463px;font-size:12px;line-height:20px;"><span style="display:inline-block;transform:scaleX(1.05);transform-origin:left">Double</span></div>
<div class="t" style="left:366px;top:463px;font-size:12px;line-height:20px;"><span style="display:inline-block;transform:scaleX(0.9);transform-origin:left">13</span></div>
<div class="t" style="left:424px;top:463px;font-size:12px;line-height:20px;width:57px;text-align:right;"><span style="display:inline-block;transform:scaleX(0.9);transform-origin:right">3</span></div>
<div class="t" style="left:486px;top:463px;font-size:12px;line-height:20px;">No</div>
<div class="ic" style="left:814px;top:464px"><i style="top:2px;width:3px"></i><i style="top:5px;width:6px"></i><i style="top:8px;width:9px"></i><i style="top:11px;width:12px"></i><i style="top:14px;width:15px"></i></div>
<div class="ic" style="left:934px;top:464px"><i style="top:2px;width:3px"></i><i style="top:5px;width:6px"></i><i style="top:8px;width:9px"></i><i style="top:11px;width:12px"></i><i style="top:14px;width:15px"></i></div>
<div class="a" style="left:15px;top:485px;width:38px;height:21px;background:#f0f0f0;border-top:1px solid #fff;border-left:1px solid #fff"></div>
<div class="a" style="left:14px;top:506px;width:39px;height:1px;background:#a0a0a0"></div>
<div class="a" style="left:53px;top:485px;width:1px;height:22px;background:#a0a0a0"></div>
<div class="a" style="left:54px;top:506px;width:900px;height:1px;background:#c0c0c0"></div>
<div class="a" style="left:133px;top:485px;width:1px;height:21px;background:#c0c0c0"></div>
<div class="a" style="left:213px;top:485px;width:1px;height:21px;background:#c0c0c0"></div>
<div class="a" style="left:363px;top:485px;width:1px;height:21px;background:#c0c0c0"></div>
<div class="a" style="left:423px;top:485px;width:1px;height:21px;background:#c0c0c0"></div>
<div class="a" style="left:483px;top:485px;width:1px;height:21px;background:#c0c0c0"></div>
<div class="a" style="left:543px;top:485px;width:1px;height:21px;background:#c0c0c0"></div>
<div class="a" style="left:633px;top:485px;width:1px;height:21px;background:#c0c0c0"></div>
<div class="a" style="left:713px;top:485px;width:1px;height:21px;background:#c0c0c0"></div>
<div class="a" style="left:833px;top:485px;width:1px;height:21px;background:#c0c0c0"></div>
<div class="a" style="left:953px;top:485px;width:1px;height:21px;background:#c0c0c0"></div>
<div class="t" style="left:56px;top:485px;font-size:12px;line-height:20px;"><span style="display:inline-block;transform:scaleX(0.94);transform-origin:left">LENGTH</span></div>
<div class="t" style="left:136px;top:485px;font-size:12px;line-height:20px;"><span style="display:inline-block;transform:scaleX(1.05);transform-origin:left">Double</span></div>
<div class="t" style="left:366px;top:485px;font-size:12px;line-height:20px;"><span style="display:inline-block;transform:scaleX(0.9);transform-origin:left">13</span></div>
<div class="t" style="left:424px;top:485px;font-size:12px;line-height:20px;width:57px;text-align:right;"><span style="display:inline-block;transform:scaleX(0.9);transform-origin:right">3</span></div>
<div class="t" style="left:486px;top:485px;font-size:12px;line-height:20px;">No</div>
<div class="ic" style="left:814px;top:486px"><i style="top:2px;width:3px"></i><i style="top:5px;width:6px"></i><i style="top:8px;width:9px"></i><i style="top:11px;width:12px"></i><i style="top:14px;width:15px"></i></div>
<div class="ic" style="left:934px;top:486px"><i style="top:2px;width:3px"></i><i style="top:5px;width:6px"></i><i style="top:8px;width:9px"></i><i style="top:11px;width:12px"></i><i style="top:14px;width:15px"></i></div>
<div class="a" style="left:15px;top:507px;width:38px;height:21px;background:#f0f0f0;border-top:1px solid #fff;border-left:1px solid #fff"></div>
<div class="a" style="left:14px;top:528px;width:39px;height:1px;background:#a0a0a0"></div>
<div class="a" style="left:53px;top:507px;width:1px;height:22px;background:#a0a0a0"></div>
<div class="a" style="left:54px;top:528px;width:900px;height:1px;background:#c0c0c0"></div>
<div class="a" style="left:133px;top:507px;width:1px;height:21px;background:#c0c0c0"></div>
<div class="a" style="left:213px;top:507px;width:1px;height:21px;background:#c0c0c0"></div>
<div class="a" style="left:363px;top:507px;width:1px;height:21px;background:#c0c0c0"></div>
<div class="a" style="left:423px;top:507px;width:1px;height:21px;background:#c0c0c0"></div>
<div class="a" style="left:483px;top:507px;width:1px;height:21px;background:#c0c0c0"></div>
<div class="a" style="left:543px;top:507px;width:1px;height:21px;background:#c0c0c0"></div>
<div class="a" style="left:633px;top:507px;width:1px;height:21px;background:#c0c0c0"></div>
<div class="a" style="left:713px;top:507px;width:1px;height:21px;background:#c0c0c0"></div>
<div class="a" style="left:833px;top:507px;width:1px;height:21px;background:#c0c0c0"></div>
<div class="a" style="left:953px;top:507px;width:1px;height:21px;background:#c0c0c0"></div>
<div class="t" style="left:56px;top:507px;font-size:12px;line-height:20px;"><span style="display:inline-block;transform:scaleX(0.97);transform-origin:left">FROM</span></div>
<div class="t" style="left:136px;top:507px;font-size:12px;line-height:20px;"><span style="display:inline-block;transform:scaleX(1.05);transform-origin:left">Double</span></div>
<div class="t" style="left:366px;top:507px;font-size:12px;line-height:20px;"><span style="display:inline-block;transform:scaleX(0.9);transform-origin:left">13</span></div>
<div class="t" style="left:424px;top:507px;font-size:12px;line-height:20px;width:57px;text-align:right;"><span style="display:inline-block;transform:scaleX(0.9);transform-origin:right">3</span></div>
<div class="t" style="left:486px;top:507px;font-size:12px;line-height:20px;">No</div>
<div class="ic" style="left:814px;top:508px"><i style="top:2px;width:3px"></i><i style="top:5px;width:6px"></i><i style="top:8px;width:9px"></i><i style="top:11px;width:12px"></i><i style="top:14px;width:15px"></i></div>
<div class="ic" style="left:934px;top:508px"><i style="top:2px;width:3px"></i><i style="top:5px;width:6px"></i><i style="top:8px;width:9px"></i><i style="top:11px;width:12px"></i><i style="top:14px;width:15px"></i></div>
<div class="a" style="left:15px;top:529px;width:38px;height:21px;background:#f0f0f0;border-top:1px solid #fff;border-left:1px solid #fff"></div>
<div class="a" style="left:14px;top:550px;width:39px;height:1px;background:#a0a0a0"></div>
<div class="a" style="left:53px;top:529px;width:1px;height:22px;background:#a0a0a0"></div>
<div class="a" style="left:54px;top:550px;width:900px;height:1px;background:#c0c0c0"></div>
<div class="a" style="left:133px;top:529px;width:1px;height:21px;background:#c0c0c0"></div>
<div class="a" style="left:213px;top:529px;width:1px;height:21px;background:#c0c0c0"></div>
<div class="a" style="left:363px;top:529px;width:1px;height:21px;background:#c0c0c0"></div>
<div class="a" style="left:423px;top:529px;width:1px;height:21px;background:#c0c0c0"></div>
<div class="a" style="left:483px;top:529px;width:1px;height:21px;background:#c0c0c0"></div>
<div class="a" style="left:543px;top:529px;width:1px;height:21px;background:#c0c0c0"></div>
<div class="a" style="left:633px;top:529px;width:1px;height:21px;background:#c0c0c0"></div>
<div class="a" style="left:713px;top:529px;width:1px;height:21px;background:#c0c0c0"></div>
<div class="a" style="left:833px;top:529px;width:1px;height:21px;background:#c0c0c0"></div>
<div class="a" style="left:953px;top:529px;width:1px;height:21px;background:#c0c0c0"></div>
<div class="t" style="left:56px;top:529px;font-size:12px;line-height:20px;"><span style="display:inline-block;transform:scaleX(0.94);transform-origin:left">TO</span></div>
<div class="t" style="left:136px;top:529px;font-size:12px;line-height:20px;"><span style="display:inline-block;transform:scaleX(1.05);transform-origin:left">Double</span></div>
<div class="t" style="left:366px;top:529px;font-size:12px;line-height:20px;"><span style="display:inline-block;transform:scaleX(0.9);transform-origin:left">13</span></div>
<div class="t" style="left:424px;top:529px;font-size:12px;line-height:20px;width:57px;text-align:right;"><span style="display:inline-block;transform:scaleX(0.9);transform-origin:right">3</span></div>
<div class="t" style="left:486px;top:529px;font-size:12px;line-height:20px;">No</div>
<div class="ic" style="left:814px;top:530px"><i style="top:2px;width:3px"></i><i style="top:5px;width:6px"></i><i style="top:8px;width:9px"></i><i style="top:11px;width:12px"></i><i style="top:14px;width:15px"></i></div>
<div class="ic" style="left:934px;top:530px"><i style="top:2px;width:3px"></i><i style="top:5px;width:6px"></i><i style="top:8px;width:9px"></i><i style="top:11px;width:12px"></i><i style="top:14px;width:15px"></i></div>
<div class="a" style="left:15px;top:551px;width:38px;height:21px;background:#f0f0f0;border-top:1px solid #fff;border-left:1px solid #fff"></div>
<div class="a" style="left:14px;top:572px;width:39px;height:1px;background:#a0a0a0"></div>
<div class="a" style="left:53px;top:551px;width:1px;height:22px;background:#a0a0a0"></div>
<div class="a" style="left:54px;top:572px;width:900px;height:1px;background:#c0c0c0"></div>
<div class="a" style="left:133px;top:551px;width:1px;height:21px;background:#c0c0c0"></div>
<div class="a" style="left:213px;top:551px;width:1px;height:21px;background:#c0c0c0"></div>
<div class="a" style="left:363px;top:551px;width:1px;height:21px;background:#c0c0c0"></div>
<div class="a" style="left:423px;top:551px;width:1px;height:21px;background:#c0c0c0"></div>
<div class="a" style="left:483px;top:551px;width:1px;height:21px;background:#c0c0c0"></div>
<div class="a" style="left:543px;top:551px;width:1px;height:21px;background:#c0c0c0"></div>
<div class="a" style="left:633px;top:551px;width:1px;height:21px;background:#c0c0c0"></div>
<div class="a" style="left:713px;top:551px;width:1px;height:21px;background:#c0c0c0"></div>
<div class="a" style="left:833px;top:551px;width:1px;height:21px;background:#c0c0c0"></div>
<div class="a" style="left:953px;top:551px;width:1px;height:21px;background:#c0c0c0"></div>
<div class="a" style="left:424px;top:551px;width:59px;height:21px;background:#f0f0f0"></div>
<div class="t" style="left:56px;top:551px;font-size:12px;line-height:20px;"><span style="display:inline-block;transform:scaleX(0.9);transform-origin:left">GEOCOD</span></div>
<div class="t" style="left:136px;top:551px;font-size:12px;line-height:20px;"><span style="display:inline-block;transform:scaleX(0.94);transform-origin:left">Text</span></div>
<div class="t" style="left:366px;top:551px;font-size:12px;line-height:20px;"><span style="display:inline-block;transform:scaleX(0.9);transform-origin:left">12</span></div>
<div class="t" style="left:424px;top:551px;font-size:12px;line-height:20px;width:57px;text-align:right;"><span style="display:inline-block;transform:scaleX(0.9);transform-origin:right">0</span></div>
<div class="t" style="left:486px;top:551px;font-size:12px;line-height:20px;">No</div>
<div class="ic" style="left:814px;top:552px"><i style="top:2px;width:3px"></i><i style="top:5px;width:6px"></i><i style="top:8px;width:9px"></i><i style="top:11px;width:12px"></i><i style="top:14px;width:15px"></i></div>
<div class="ic" style="left:934px;top:552px"><i style="top:2px;width:3px"></i><i style="top:5px;width:6px"></i><i style="top:8px;width:9px"></i><i style="top:11px;width:12px"></i><i style="top:14px;width:15px"></i></div>
<div class="a" style="left:15px;top:573px;width:38px;height:21px;background:#f0f0f0;border-top:1px solid #fff;border-left:1px solid #fff"></div>
<div class="a" style="left:14px;top:594px;width:39px;height:1px;background:#a0a0a0"></div>
<div class="a" style="left:53px;top:573px;width:1px;height:22px;background:#a0a0a0"></div>
<div class="a" style="left:54px;top:594px;width:900px;height:1px;background:#c0c0c0"></div>
<div class="a" style="left:133px;top:573px;width:1px;height:21px;background:#c0c0c0"></div>
<div class="a" style="left:213px;top:573px;width:1px;height:21px;background:#c0c0c0"></div>
<div class="a" style="left:363px;top:573px;width:1px;height:21px;background:#c0c0c0"></div>
<div class="a" style="left:423px;top:573px;width:1px;height:21px;background:#c0c0c0"></div>
<div class="a" style="left:483px;top:573px;width:1px;height:21px;background:#c0c0c0"></div>
<div class="a" style="left:543px;top:573px;width:1px;height:21px;background:#c0c0c0"></div>
<div class="a" style="left:633px;top:573px;width:1px;height:21px;background:#c0c0c0"></div>
<div class="a" style="left:713px;top:573px;width:1px;height:21px;background:#c0c0c0"></div>
<div class="a" style="left:833px;top:573px;width:1px;height:21px;background:#c0c0c0"></div>
<div class="a" style="left:953px;top:573px;width:1px;height:21px;background:#c0c0c0"></div>
<div class="a" style="left:424px;top:573px;width:59px;height:21px;background:#f0f0f0"></div>
<div class="t" style="left:56px;top:573px;font-size:12px;line-height:20px;"><span style="display:inline-block;transform:scaleX(0.95);transform-origin:left">BOUND</span></div>
<div class="t" style="left:136px;top:573px;font-size:12px;line-height:20px;"><span style="display:inline-block;transform:scaleX(0.94);transform-origin:left">Text</span></div>
<div class="t" style="left:366px;top:573px;font-size:12px;line-height:20px;"><span style="display:inline-block;transform:scaleX(0.9);transform-origin:left">12</span></div>
<div class="t" style="left:424px;top:573px;font-size:12px;line-height:20px;width:57px;text-align:right;"><span style="display:inline-block;transform:scaleX(0.9);transform-origin:right">0</span></div>
<div class="t" style="left:486px;top:573px;font-size:12px;line-height:20px;">No</div>
<div class="ic" style="left:814px;top:574px"><i style="top:2px;width:3px"></i><i style="top:5px;width:6px"></i><i style="top:8px;width:9px"></i><i style="top:11px;width:12px"></i><i style="top:14px;width:15px"></i></div>
<div class="ic" style="left:934px;top:574px"><i style="top:2px;width:3px"></i><i style="top:5px;width:6px"></i><i style="top:8px;width:9px"></i><i style="top:11px;width:12px"></i><i style="top:14px;width:15px"></i></div>
<div class="a" style="left:15px;top:595px;width:38px;height:21px;background:#f0f0f0;border-top:1px solid #fff;border-left:1px solid #fff"></div>
<div class="a" style="left:14px;top:616px;width:39px;height:1px;background:#a0a0a0"></div>
<div class="a" style="left:53px;top:595px;width:1px;height:22px;background:#a0a0a0"></div>
<div class="a" style="left:54px;top:616px;width:900px;height:1px;background:#c0c0c0"></div>
<div class="a" style="left:133px;top:595px;width:1px;height:21px;background:#c0c0c0"></div>
<div class="a" style="left:213px;top:595px;width:1px;height:21px;background:#c0c0c0"></div>
<div class="a" style="left:363px;top:595px;width:1px;height:21px;background:#c0c0c0"></div>
<div class="a" style="left:423px;top:595px;width:1px;height:21px;background:#c0c0c0"></div>
<div class="a" style="left:483px;top:595px;width:1px;height:21px;background:#c0c0c0"></div>
<div class="a" style="left:543px;top:595px;width:1px;height:21px;background:#c0c0c0"></div>
<div class="a" style="left:633px;top:595px;width:1px;height:21px;background:#c0c0c0"></div>
<div class="a" style="left:713px;top:595px;width:1px;height:21px;background:#c0c0c0"></div>
<div class="a" style="left:833px;top:595px;width:1px;height:21px;background:#c0c0c0"></div>
<div class="a" style="left:953px;top:595px;width:1px;height:21px;background:#c0c0c0"></div>
<div class="t" style="left:56px;top:595px;font-size:12px;line-height:20px;"><span style="display:inline-block;transform:scaleX(1.0);transform-origin:left">ZN</span></div>
<div class="t" style="left:136px;top:595px;font-size:12px;line-height:20px;"><span style="display:inline-block;transform:scaleX(1.05);transform-origin:left">Double</span></div>
<div class="t" style="left:366px;top:595px;font-size:12px;line-height:20px;"><span style="display:inline-block;transform:scaleX(0.9);transform-origin:left">13</span></div>
<div class="t" style="left:424px;top:595px;font-size:12px;line-height:20px;width:57px;text-align:right;"><span style="display:inline-block;transform:scaleX(0.9);transform-origin:right">3</span></div>
<div class="t" style="left:486px;top:595px;font-size:12px;line-height:20px;">No</div>
<div class="ic" style="left:814px;top:596px"><i style="top:2px;width:3px"></i><i style="top:5px;width:6px"></i><i style="top:8px;width:9px"></i><i style="top:11px;width:12px"></i><i style="top:14px;width:15px"></i></div>
<div class="ic" style="left:934px;top:596px"><i style="top:2px;width:3px"></i><i style="top:5px;width:6px"></i><i style="top:8px;width:9px"></i><i style="top:11px;width:12px"></i><i style="top:14px;width:15px"></i></div>
<div class="a" style="left:15px;top:617px;width:38px;height:21px;background:#f0f0f0;border-top:1px solid #fff;border-left:1px solid #fff"></div>
<div class="a" style="left:14px;top:638px;width:39px;height:1px;background:#a0a0a0"></div>
<div class="a" style="left:53px;top:617px;width:1px;height:22px;background:#a0a0a0"></div>
<div class="a" style="left:54px;top:638px;width:900px;height:1px;background:#c0c0c0"></div>
<div class="a" style="left:133px;top:617px;width:1px;height:21px;background:#c0c0c0"></div>
<div class="a" style="left:213px;top:617px;width:1px;height:21px;background:#c0c0c0"></div>
<div class="a" style="left:363px;top:617px;width:1px;height:21px;background:#c0c0c0"></div>
<div class="a" style="left:423px;top:617px;width:1px;height:21px;background:#c0c0c0"></div>
<div class="a" style="left:483px;top:617px;width:1px;height:21px;background:#c0c0c0"></div>
<div class="a" style="left:543px;top:617px;width:1px;height:21px;background:#c0c0c0"></div>
<div class="a" style="left:633px;top:617px;width:1px;height:21px;background:#c0c0c0"></div>
<div class="a" style="left:713px;top:617px;width:1px;height:21px;background:#c0c0c0"></div>
<div class="a" style="left:833px;top:617px;width:1px;height:21px;background:#c0c0c0"></div>
<div class="a" style="left:953px;top:617px;width:1px;height:21px;background:#c0c0c0"></div>
<div class="t" style="left:56px;top:617px;font-size:12px;line-height:20px;"><span style="display:inline-block;transform:scaleX(0.95);transform-origin:left">PB</span></div>
<div class="t" style="left:136px;top:617px;font-size:12px;line-height:20px;"><span style="display:inline-block;transform:scaleX(1.05);transform-origin:left">Double</span></div>
<div class="t" style="left:366px;top:617px;font-size:12px;line-height:20px;"><span style="display:inline-block;transform:scaleX(0.9);transform-origin:left">13</span></div>
<div class="t" style="left:424px;top:617px;font-size:12px;line-height:20px;width:57px;text-align:right;"><span style="display:inline-block;transform:scaleX(0.9);transform-origin:right">3</span></div>
<div class="t" style="left:486px;top:617px;font-size:12px;line-height:20px;">No</div>
<div class="ic" style="left:814px;top:618px"><i style="top:2px;width:3px"></i><i style="top:5px;width:6px"></i><i style="top:8px;width:9px"></i><i style="top:11px;width:12px"></i><i style="top:14px;width:15px"></i></div>
<div class="ic" style="left:934px;top:618px"><i style="top:2px;width:3px"></i><i style="top:5px;width:6px"></i><i style="top:8px;width:9px"></i><i style="top:11px;width:12px"></i><i style="top:14px;width:15px"></i></div>
<div class="a" style="left:15px;top:639px;width:38px;height:21px;background:#f0f0f0;border-top:1px solid #fff;border-left:1px solid #fff"></div>
<div class="a" style="left:14px;top:660px;width:39px;height:1px;background:#a0a0a0"></div>
<div class="a" style="left:53px;top:639px;width:1px;height:22px;background:#a0a0a0"></div>
<div class="a" style="left:54px;top:660px;width:900px;height:1px;background:#c0c0c0"></div>
<div class="a" style="left:133px;top:639px;width:1px;height:21px;background:#c0c0c0"></div>
<div class="a" style="left:213px;top:639px;width:1px;height:21px;background:#c0c0c0"></div>
<div class="a" style="left:363px;top:639px;width:1px;height:21px;background:#c0c0c0"></div>
<div class="a" style="left:423px;top:639px;width:1px;height:21px;background:#c0c0c0"></div>
<div class="a" style="left:483px;top:639px;width:1px;height:21px;background:#c0c0c0"></div>
<div class="a" style="left:543px;top:639px;width:1px;height:21px;background:#c0c0c0"></div>
<div class="a" style="left:633px;top:639px;width:1px;height:21px;background:#c0c0c0"></div>
<div class="a" style="left:713px;top:639px;width:1px;height:21px;background:#c0c0c0"></div>
<div class="a" style="left:833px;top:639px;width:1px;height:21px;background:#c0c0c0"></div>
<div class="a" style="left:953px;top:639px;width:1px;height:21px;background:#c0c0c0"></div>
<div class="t" style="left:56px;top:639px;font-size:12px;line-height:20px;"><span style="display:inline-block;transform:scaleX(0.86);transform-origin:left">ORE</span></div>
<div class="t" style="left:136px;top:639px;font-size:12px;line-height:20px;"><span style="display:inline-block;transform:scaleX(1.05);transform-origin:left">Double</span></div>
<div class="t" style="left:366px;top:639px;font-size:12px;line-height:20px;"><span style="display:inline-block;transform:scaleX(0.9);transform-origin:left">3</span></div>
<div class="t" style="left:424px;top:639px;font-size:12px;line-height:20px;width:57px;text-align:right;"><span style="display:inline-block;transform:scaleX(0.9);transform-origin:right">0</span></div>
<div class="t" style="left:486px;top:639px;font-size:12px;line-height:20px;">No</div>
<div class="ic" style="left:814px;top:640px"><i style="top:2px;width:3px"></i><i style="top:5px;width:6px"></i><i style="top:8px;width:9px"></i><i style="top:11px;width:12px"></i><i style="top:14px;width:15px"></i></div>
<div class="ic" style="left:934px;top:640px"><i style="top:2px;width:3px"></i><i style="top:5px;width:6px"></i><i style="top:8px;width:9px"></i><i style="top:11px;width:12px"></i><i style="top:14px;width:15px"></i></div>
<div class="a" style="left:15px;top:661px;width:38px;height:21px;background:#f0f0f0;border-top:1px solid #fff;border-left:1px solid #fff"></div>
<div class="a" style="left:14px;top:682px;width:39px;height:1px;background:#a0a0a0"></div>
<div class="a" style="left:53px;top:661px;width:1px;height:22px;background:#a0a0a0"></div>
<div class="a" style="left:54px;top:682px;width:900px;height:1px;background:#c0c0c0"></div>
<div class="a" style="left:133px;top:661px;width:1px;height:21px;background:#c0c0c0"></div>
<div class="a" style="left:213px;top:661px;width:1px;height:21px;background:#c0c0c0"></div>
<div class="a" style="left:363px;top:661px;width:1px;height:21px;background:#c0c0c0"></div>
<div class="a" style="left:423px;top:661px;width:1px;height:21px;background:#c0c0c0"></div>
<div class="a" style="left:483px;top:661px;width:1px;height:21px;background:#c0c0c0"></div>
<div class="a" style="left:543px;top:661px;width:1px;height:21px;background:#c0c0c0"></div>
<div class="a" style="left:633px;top:661px;width:1px;height:21px;background:#c0c0c0"></div>
<div class="a" style="left:713px;top:661px;width:1px;height:21px;background:#c0c0c0"></div>
<div class="a" style="left:833px;top:661px;width:1px;height:21px;background:#c0c0c0"></div>
<div class="a" style="left:953px;top:661px;width:1px;height:21px;background:#c0c0c0"></div>
<div class="ic" style="left:814px;top:662px"><i style="top:2px;width:3px"></i><i style="top:5px;width:6px"></i><i style="top:8px;width:9px"></i><i style="top:11px;width:12px"></i><i style="top:14px;width:15px"></i></div>
<div class="ic" style="left:934px;top:662px"><i style="top:2px;width:3px"></i><i style="top:5px;width:6px"></i><i style="top:8px;width:9px"></i><i style="top:11px;width:12px"></i><i style="top:14px;width:15px"></i></div>
<div class="a" style="left:963px;top:245px;width:16px;height:438px;background:#f0f0f0"></div>
<div class="a" style="left:963px;top:262px;width:15px;height:25px;background:#cdcdcd"></div>
<svg class="a" style="left:967px;top:251px" width="7" height="6" viewBox="0 0 7 6" shape-rendering="crispEdges" fill="#505050"><rect x="3" y="0" width="1" height="1"/><rect x="2" y="1" width="1" height="1"/><rect x="3" y="1" width="1" height="1"/><rect x="4" y="1" width="1" height="1"/><rect x="1" y="2" width="1" height="1"/><rect x="2" y="2" width="1" height="1"/><rect x="3" y="2" width="1" height="1"/><rect x="4" y="2" width="1" height="1"/><rect x="5" y="2" width="1" height="1"/><rect x="0" y="3" width="1" height="1"/><rect x="1" y="3" width="1" height="1"/><rect x="2" y="3" width="1" height="1"/><rect x="4" y="3" width="1" height="1"/><rect x="5" y="3" width="1" height="1"/><rect x="6" y="3" width="1" height="1"/><rect x="0" y="4" width="1" height="1"/><rect x="1" y="4" width="1" height="1"/><rect x="5" y="4" width="1" height="1"/><rect x="6" y="4" width="1" height="1"/><rect x="0" y="5" width="1" height="1"/><rect x="6" y="5" width="1" height="1"/></svg>
<svg class="a" style="left:967px;top:672px" width="7" height="6" viewBox="0 0 7 6" shape-rendering="crispEdges" fill="#505050"><rect x="0" y="0" width="1" height="1"/><rect x="6" y="0" width="1" height="1"/><rect x="0" y="1" width="1" height="1"/><rect x="1" y="1" width="1" height="1"/><rect x="5" y="1" width="1" height="1"/><rect x="6" y="1" width="1" height="1"/><rect x="0" y="2" width="1" height="1"/><rect x="1" y="2" width="1" height="1"/><rect x="2" y="2" width="1" height="1"/><rect x="4" y="2" width="1" height="1"/><rect x="5" y="2" width="1" height="1"/><rect x="6" y="2" width="1" height="1"/><rect x="1" y="3" width="1" height="1"/><rect x="2" y="3" width="1" height="1"/><rect x="3" y="3" width="1" height="1"/><rect x="4" y="3" width="1" height="1"/><rect x="5" y="3" width="1" height="1"/><rect x="2" y="4" width="1" height="1"/><rect x="3" y="4" width="1" height="1"/><rect x="4" y="4" width="1" height="1"/><rect x="3" y="5" width="1" height="1"/></svg>
<div class="a" style="left:16px;top:689px;width:2px;height:1px;background:#000"></div>
<div class="a" style="left:15px;top:690px;width:4px;height:1px;background:#000"></div>
<div class="a" style="left:14px;top:691px;width:6px;height:1px;background:#000"></div>
<div class="dot" style="left:23px;top:688px"></div>
<div class="dot" style="left:23px;top:691px"></div>
<div class="dot" style="left:26px;top:688px"></div>
<div class="dot" style="left:26px;top:691px"></div>
<div class="dot" style="left:29px;top:688px"></div>
<div class="dot" style="left:29px;top:691px"></div>
<div class="dot" style="left:32px;top:688px"></div>
<div class="dot" style="left:32px;top:691px"></div>
</body></html>
